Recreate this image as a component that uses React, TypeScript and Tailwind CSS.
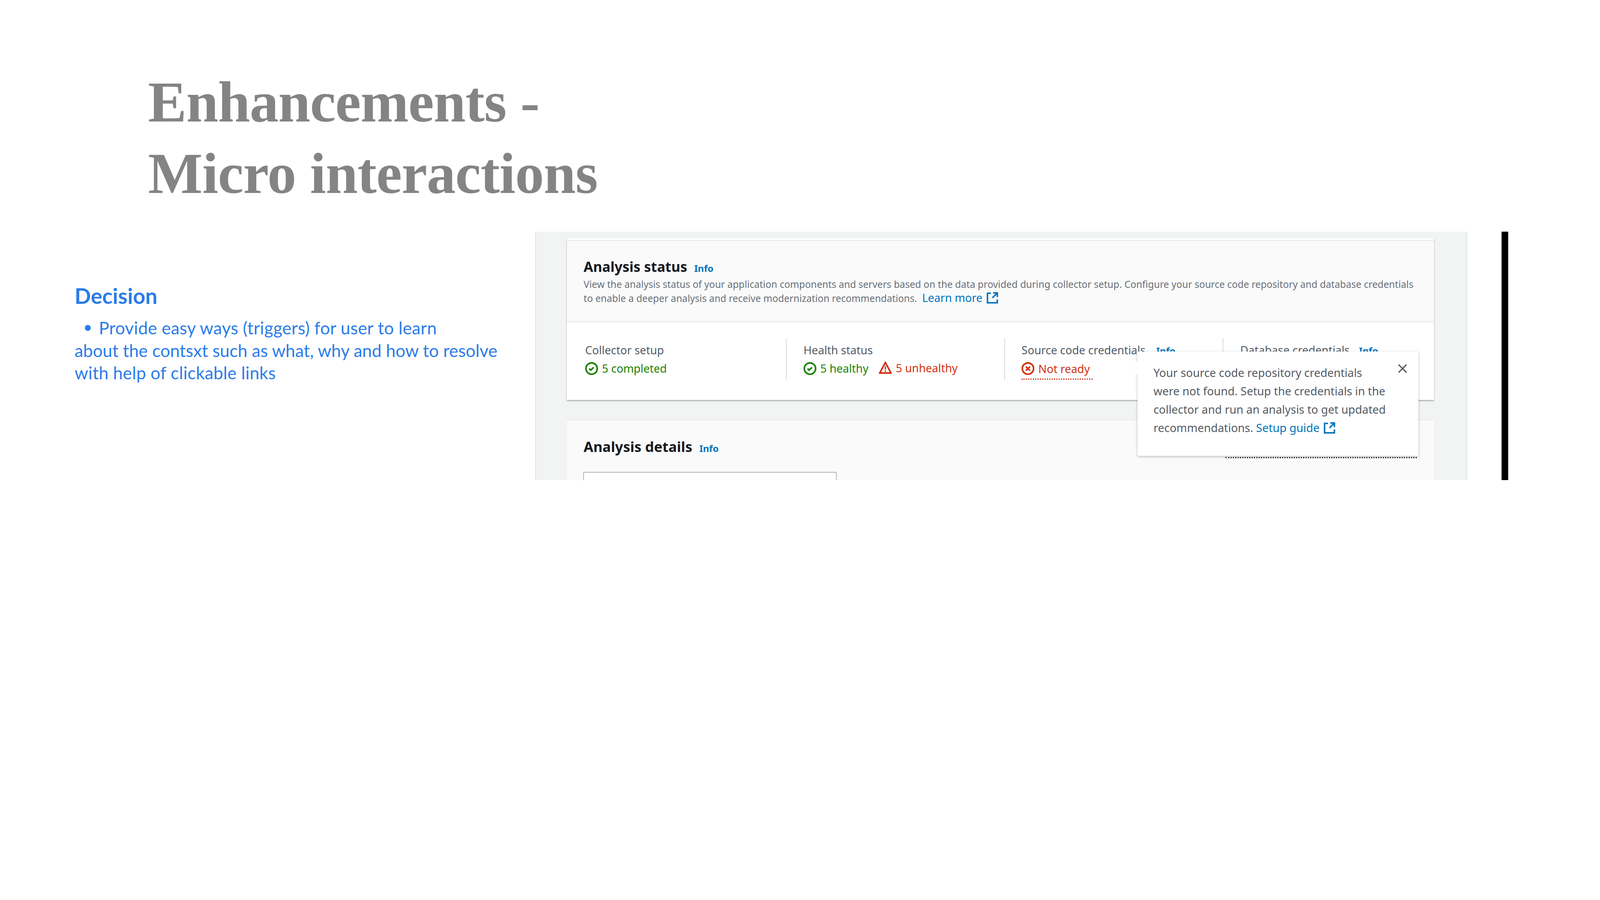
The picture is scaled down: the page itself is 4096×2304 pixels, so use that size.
const sans = "font-['Noto_Sans',sans-serif]";

const CheckIcon = () => (
    <svg viewBox="0 0 16 16" className="w-[33px] h-[33px] shrink-0 fill-none stroke-[#1d8102] stroke-2">
        <circle cx="8" cy="8" r="7" />
        <path d="m5 8 2 2 3.5-3.5" />
    </svg>
);

const WarnIcon = () => (
    <svg viewBox="0 0 16 16" className="w-[33px] h-[33px] shrink-0">
        <path d="m8 1.5-7 13h14z" fill="none" stroke="#d13212" strokeWidth="2" />
        <path d="M7.2 6h1.6v4H7.2zM7.2 11h1.6v1.8H7.2z" fill="#d13212" />
    </svg>
);

const ErrorIcon = () => (
    <svg viewBox="0 0 16 16" className="w-[33px] h-[33px] shrink-0 fill-none stroke-[#d13212] stroke-2">
        <circle cx="8" cy="8" r="7" />
        <path d="m10.5 5.5-5 5M10.5 10.5l-5-5" />
    </svg>
);

const ExternalIcon = () => (
    <svg viewBox="0 0 16 16" className="w-[31px] h-[31px] ml-[3px] inline-block align-[-5px] fill-none stroke-[#0073bb] stroke-2">
        <path d="M14.5 7V1.5H9M14.5 1.5 8 8M6 2H1.5v12.5h13V10" />
    </svg>
);

const Info = ({ className = "" }: { className?: string }) => (
    <span className={`text-[#0073bb] font-bold text-[24px] ${className}`}>Info</span>
);

export default function App() {
    return (
        <div className="w-[4096px] h-[2304px] bg-white overflow-hidden">
            <div className="h-[593px] pl-[379px] pt-[170px]">
                <h1 className="font-['Liberation_Serif',serif] font-bold text-[#848484] text-[148px] leading-[183px] tracking-[-1px]">
                    Enhancements -<br />
                    Micro interactions
                </h1>
            </div>

            <div className="flex items-start">
                <div className="w-[1370px] pl-[191px] pt-[134px] font-['Lato',sans-serif] text-[#2b7ce9]">
                    <h2 className="font-bold text-[55px] leading-[60px]">Decision</h2>
                    <p className="mt-[22px] text-[44.2px] leading-[57.5px]">
                        <span className="block pl-[22px] tracking-[0.3px]">
                            <span className="inline-block w-[40px] align-[4px] text-[40px]">•</span>
                            Provide easy ways (triggers) for user to learn
                        </span>
                        <span className="block">about the contsxt such as what, why and how to resolve</span>
                        <span className="block tracking-[0.3px]">with help of clickable links</span>
                    </p>
                </div>

                <div className={`relative w-[2386px] h-[636px] overflow-hidden bg-[#f2f3f3] border-x-2 border-[#dfe3e3] pt-[17px] pl-[79px] pr-[83px] ${sans}`}>
                    <section className="bg-white pt-[4px] shadow-[0_2px_3px_rgba(84,91,100,0.55)] h-[414px]">
                        <header className="bg-[#fafafa] border-y-[3px] border-[#eaeded] h-[211px] pl-[43px] pt-[43px]">
                            <div className="flex items-baseline gap-[18px] h-[44px]">
                                <h3 className="font-bold text-[35.4px] leading-[44px] text-[#16191f]">Analysis status</h3>
                                <Info />
                            </div>
                            <p className="mt-[7px] text-[#687078] text-[24.6px] leading-[34px] whitespace-nowrap">
                                View the analysis status of your application components and servers based on the data provided during collector setup. Configure your source code repository and database credentials
                                <br />
                                to enable a deeper analysis and receive modernization recommendations.
                                <span className="text-[#0073bb] text-[28.4px] ml-[13px]">
                                    Learn more <ExternalIcon />
                                </span>
                            </p>
                        </header>
                        <div className="flex pt-[41px] text-[28.5px] leading-[40px]">
                            <div className="w-[561px] h-[106px] pl-[47px] pt-[10px]">
                                <div className="text-[#545b64]">Collector setup</div>
                                <div className="mt-[7px] flex items-center gap-[10px] text-[#1d8102]">
                                    <CheckIcon />5 completed
                                </div>
                            </div>
                            <div className="w-[559px] h-[106px] pl-[43px] pt-[10px] border-l-2 border-[#d5dbdb]">
                                <div className="text-[#545b64]">Health status</div>
                                <div className="mt-[7px] flex items-center gap-[10px]">
                                    <CheckIcon />
                                    <span className="text-[#1d8102]">5 healthy</span>
                                    <span className="ml-[17px] -mt-[4px]"><WarnIcon /></span>
                                    <span className="text-[#d13212] -mt-[3px]">5 unhealthy</span>
                                </div>
                            </div>
                            <div className="w-[559px] h-[106px] pl-[42px] pt-[10px] border-l-2 border-[#d5dbdb]">
                                <div className="text-[#545b64] whitespace-nowrap">
                                    Source code credentials <Info className="ml-[20px]" />
                                </div>
                                <div className="mt-[7px] inline-flex items-center gap-[10px] text-[#d13212] border-b-[3px] border-dotted border-[#d13212] h-[47px] pb-[7px] w-[182px] whitespace-nowrap">
                                    <ErrorIcon />Not ready
                                </div>
                            </div>
                            <div className="h-[106px] pl-[43px] pt-[10px] border-l-2 border-[#d5dbdb] text-[#545b64] whitespace-nowrap">
                                Database credentials <Info className="ml-[16px]" />
                            </div>
                        </div>
                    </section>

                    <section className="relative mt-[50px] bg-[#fafafa] border-t-2 border-[#eaeded] h-[300px] pl-[43px] pt-[46px]">
                        <div className="flex items-baseline gap-[18px] h-[44px]">
                            <h3 className="font-bold text-[36px] leading-[44px] text-[#16191f]">Analysis details</h3>
                            <Info />
                        </div>
                        <div className="-ml-[1px] mt-[42px] w-[649px] h-[100px] bg-white border-2 border-[#aab7b8] rounded-[4px]" />
                        <div className="absolute top-[94px] right-[44px] w-[490px] border-t-[3px] border-dotted border-[#16191f]" />
                    </section>

                    <div className="absolute left-[1540px] top-[307px] w-[719px] h-[267px] bg-white rounded-[4px] shadow-[0_2px_6px_rgba(84,91,100,0.4)] pl-[41px] pt-[30px] text-[28.8px] leading-[47px] text-[#545b64] whitespace-nowrap">
                        <div className="absolute -left-[12px] top-[30px] w-[24px] h-[24px] bg-white rotate-45" />
                        <p className="relative">
                            Your source code repository credentials<br />
                            were not found. Setup the credentials in the<br />
                            collector and run an analysis to get updated<br />
                            recommendations. <span className="text-[#0073bb]">Setup guide <ExternalIcon /></span>
                        </p>
                        <svg viewBox="0 0 16 16" className="absolute right-[27px] top-[30px] w-[27px] h-[27px] fill-none stroke-[#545b64] stroke-2">
                            <path d="m2 2 12 12M14 2 2 14" />
                        </svg>
                    </div>
                </div>

                <div className="ml-[88px] w-[17px] h-[636px] bg-black" />
            </div>
        </div>
    );
}
